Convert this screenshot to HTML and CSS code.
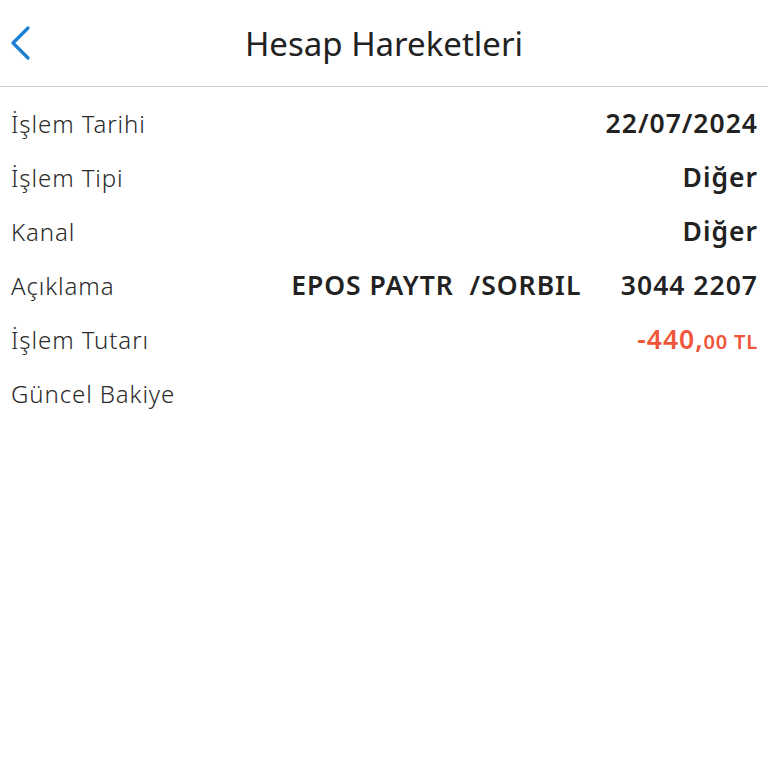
FILE: index.html
```html
<!DOCTYPE html>
<html>
<head>
<meta charset="utf-8">
<meta name="viewport" content="width=device-width,initial-scale=1.0">
<title>Hesap Hareketleri</title>
<link rel="stylesheet" href="styles.css">
</head>
<body>

<header class="topbar">
  <a href="#" class="back">
    <svg width="22" height="36" viewBox="0 0 22 36">
      <path d="M19 3 L4 18 L19 33" fill="none" stroke="#1b80d2" stroke-width="3.2" stroke-linecap="round" stroke-linejoin="round"/>
    </svg>
  </a>
  <h1 class="title">Hesap Hareketleri</h1>
</header>

<div class="details">
  <div class="row">
    <span class="label">İşlem Tarihi</span>
    <span class="value">22/07/2024</span>
  </div>
  <div class="row">
    <span class="label">İşlem Tipi</span>
    <span class="value">Diğer</span>
  </div>
  <div class="row">
    <span class="label">Kanal</span>
    <span class="value">Diğer</span>
  </div>
  <div class="row">
    <span class="label">Açıklama</span>
    <span class="value desc">EPOS PAYTR  /SORBIL     3044 2207</span>
  </div>
  <div class="row">
    <span class="label">İşlem Tutarı</span>
    <span class="value amount">-440,<small>00 TL</small></span>
  </div>
  <div class="row">
    <span class="label">Güncel Bakiye</span>
    <span class="value"></span>
  </div>
</div>

</body>
</html>
```

FILE: styles.css
```css
body{
  margin:0;
  background:#ffffff;
  font-family:"Noto Sans","Open Sans",sans-serif;
  color:#262626;
}

.topbar{
  position:relative;
  height:86px;
  border-bottom:1px solid #d0d0d0;
  display:flex;
  align-items:center;
  justify-content:center;
}

.back{
  position:absolute;
  left:9px;
  top:25px;
  display:block;
  line-height:0;
}

.title{
  margin:0;
  font-size:33px;
  font-weight:400;
  color:#222222;
}

.details{
  padding:9px 11px 0 11px;
}

.row{
  height:54px;
  display:flex;
  align-items:center;
  justify-content:space-between;
}

.label{
  font-size:24px;
  font-weight:300;
  color:#2a2a2a;
  letter-spacing:0.9px;
}

.value{
  font-size:26.5px;
  font-weight:600;
  color:#222222;
  letter-spacing:1px;
  margin-right:-1px;
}

.desc{
  white-space:pre;
}

.amount{
  color:#f0553a;
}

.amount small{
  font-size:20px;
  font-weight:600;
  letter-spacing:0.8px;
}
```
